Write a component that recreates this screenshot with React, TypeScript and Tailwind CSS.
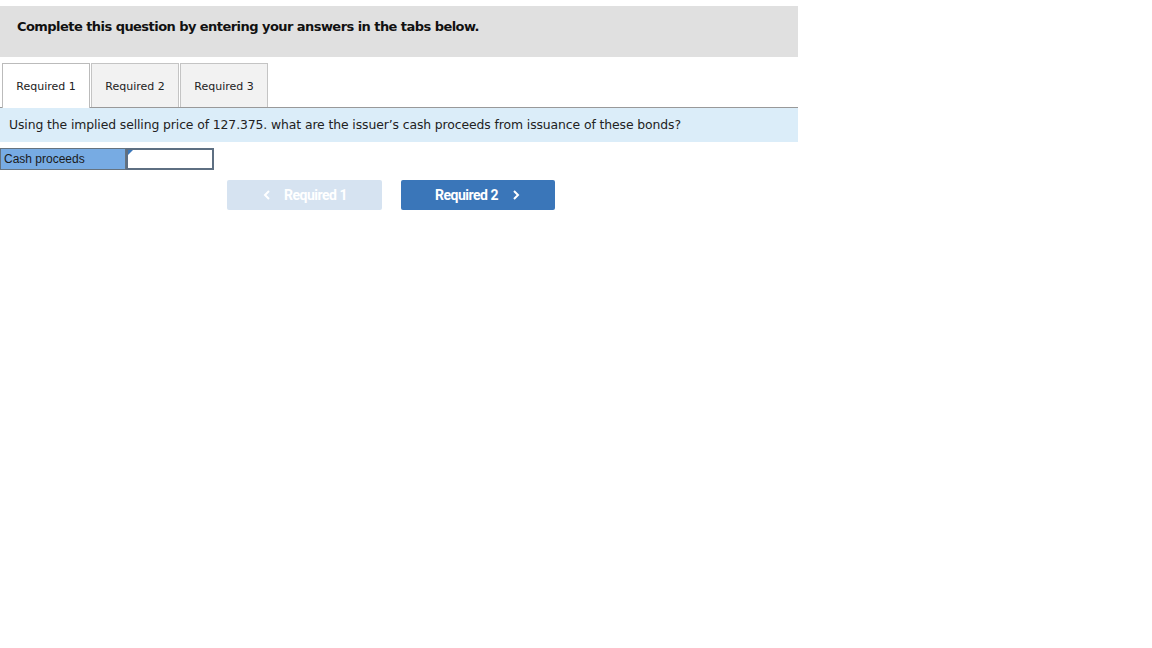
import React from "react";

export default function App() {
  const verdana = { fontFamily: '"DejaVu Sans", Verdana, sans-serif' };
  return (
    <div className="w-[1152px] h-[648px] bg-white pt-[6px]" style={verdana}>
      <div className="w-[798px]">
        <div className="h-[51px] bg-[#e0e0e0] pt-[13px] pl-[17px] text-[13px] leading-[16px] font-bold text-[#111] tracking-[-0.55px]">
          Complete this question by entering your answers in the tabs below.
        </div>
        <div className="mt-[6px] flex items-end h-[45px] pl-[2px] border-b border-[#999]">
          <div className="w-[88px] h-[45px] bg-white border border-b-0 border-[#bbb] flex items-center justify-center pt-[2px] text-[11px] text-[#222] -mb-px relative z-10">
            Required 1
          </div>
          <div className="ml-[1px] w-[88px] h-[44px] bg-[#f2f2f2] border border-b-0 border-[#c4c4c4] flex items-center justify-center pt-[3px] text-[11px] text-[#222]">
            Required 2
          </div>
          <div className="ml-[1px] w-[88px] h-[44px] bg-[#f2f2f2] border border-b-0 border-[#c4c4c4] flex items-center justify-center pt-[3px] text-[11px] text-[#222]">
            Required 3
          </div>
        </div>
        <div className="h-[34px] bg-[#dbedf9] flex items-center pl-[9px] pt-[1px] text-[12.4px] text-[#222] tracking-[-0.1px]">
          Using the implied selling price of 127.375. what are the issuer’s cash proceeds from issuance of these bonds?
        </div>
        <div className="mt-[6px] flex h-[22px]">
          <div
            className="w-[126px] h-[22px] bg-[#77abe3] border border-[#66737f] flex items-center pl-[3px] text-[12px] text-[#1a1a1a]"
            style={{ fontFamily: '"Liberation Sans", Arial, sans-serif' }}
          >
            Cash proceeds
          </div>
          <div className="relative w-[88px] h-[22px] bg-white border-2 border-[#5e6f82]">
            <div className="absolute left-0 top-0 w-0 h-0 border-t-[5px] border-t-[#3a76b9] border-r-[5px] border-r-transparent" />
          </div>
        </div>
        <div
          className="mt-[10px] flex"
          style={{ fontFamily: 'Roboto, "Liberation Sans", sans-serif' }}
        >
          <div className="ml-[227px] w-[155px] h-[30px] rounded-[2px] bg-[#d6e3f1] flex items-center justify-center text-white text-[14px] font-bold tracking-[-0.5px] leading-none">
            <svg width="10" height="12" viewBox="0 0 10 12" className="mr-[12px]">
              <path d="M7 2 L3 6 L7 10" fill="none" stroke="white" strokeWidth="2" />
            </svg>
            Required 1
          </div>
          <div className="ml-[19px] w-[154px] h-[30px] rounded-[2px] bg-[#3a76b9] flex items-center justify-center text-white text-[14px] font-bold tracking-[-0.5px] leading-none">
            Required 2
            <svg width="10" height="12" viewBox="0 0 10 12" className="ml-[13px]">
              <path d="M3 2 L7 6 L3 10" fill="none" stroke="white" strokeWidth="2" />
            </svg>
          </div>
        </div>
      </div>
    </div>
  );
}
